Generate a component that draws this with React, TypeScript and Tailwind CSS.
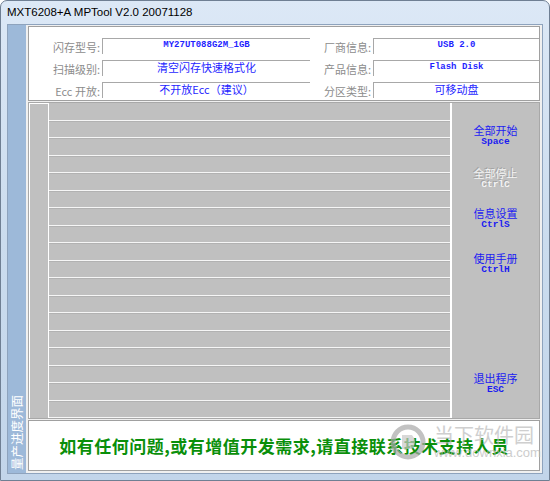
const rows = Array.from({ length: 18 });

const cjk = "font-['Noto_Sans_CJK_SC',sans-serif]";
const mono = "font-['Liberation_Mono','Noto_Sans_CJK_SC',monospace]";

function Field({ label, value, isMono }: { label: string; value: string; isMono?: boolean }) {
  return (
    <>
      <div className={`h-[19px] flex items-center justify-end text-[11px] leading-none text-[#8c8c8c] ${cjk}`}>{label}</div>
      <div
        className={`h-[16px] border-t border-l border-[#a8a8a8] text-center text-[#1f1fff] ${
          isMono ? `${mono} font-bold text-[9px] leading-[12px]` : `${cjk} text-[11px] leading-[12px]`
        }`}
      >
        {value}
      </div>
    </>
  );
}

function Btn({ title, key1, disabled, mt }: { title: string; key1: string; disabled?: boolean; mt: string }) {
  const color = disabled ? "text-[#f4f4f4] [text-shadow:-1px_-1px_0_#a2a2a2]" : "text-[#1b1bf2]";
  return (
    <div className={`flex flex-col items-center ${mt} ${color}`}>
      <span className={`text-[11px] leading-[11px] ${cjk}`}>{title}</span>
      <span className={`text-[9.5px] leading-[12px] font-bold ${mono}`}>{key1}</span>
    </div>
  );
}

export default function App() {
  return (
    <div className="w-[550px] h-[481px] bg-white relative overflow-hidden">
      <div className="h-full flex flex-col rounded-t-[7px] border border-[#6f7f93] bg-gradient-to-b from-[#dce8f6] via-[#cbdcee] to-[#c2d5ea]">
        <div className="h-[24px] flex items-center pl-[6px] text-[11.5px] text-black font-['Liberation_Sans',sans-serif]">
          MXT6208+A MPTool V2.0 20071128
        </div>
        <div className="flex-1 mx-[6px] mb-[6px] border border-[#8ea3bd] bg-[#f0f0f0] flex">
          <div className="w-[18px] bg-[#9db9d9] flex items-end justify-center pb-[3px]">
            <span className={`[writing-mode:vertical-rl] [text-orientation:sideways] rotate-180 text-white text-[12.5px] leading-none ${cjk}`}>
              量产进度界面
            </span>
          </div>
          <div className="flex-1 mx-[2px] mt-[1px] mb-[2px] flex flex-col">
            {/* info panel */}
            <div className="h-[75px] bg-white border border-[#a0a0a0] pt-[11px]">
              <div className="grid grid-cols-[71px_208px_59px_1fr] gap-x-[2px] gap-y-[3px] items-start">
                <Field label="闪存型号:" value="MY27UT088G2M_1GB" isMono />
                <Field label="厂商信息:" value="USB 2.0" isMono />
                <Field label="扫描级别:" value="清空闪存快速格式化" />
                <Field label="产品信息:" value="Flash Disk" isMono />
                <Field label="Ecc 开放:" value="不开放Ecc（建议）" />
                <Field label="分区类型:" value="可移动盘" />
              </div>
            </div>

            {/* progress area */}
            <div className="flex-1 mt-[1px] flex bg-[#c0c0c0] border border-[#a8a8a8]">
              <div className="w-[19px] border-t border-l border-white bg-[#c0c0c0]" />
              <div className="flex-1 flex flex-col border-l border-white">
                {rows.map((_, i) => (
                  <div
                    key={i}
                    className={`${i % 2 === 0 ? "h-[18px]" : "h-[17px]"} border-b border-b-[#f6f6f6] border-t border-t-[#b2b2b2] first:border-t-transparent bg-[#c0c0c0]`}
                  />
                ))}
              </div>
              <div className="w-[89px] border-l-2 border-white flex flex-col">
                <Btn title="全部开始" key1="Space" mt="mt-[22px]" />
                <Btn title="全部停止" key1="CtrlC" disabled mt="mt-[20px]" />
                <Btn title="信息设置" key1="CtrlS" mt="mt-[17px]" />
                <Btn title="使用手册" key1="CtrlH" mt="mt-[22px]" />
                <Btn title="退出程序" key1="ESC" mt="mt-[97px]" />
              </div>
            </div>

            {/* message panel */}
            <div className="h-[51px] mt-[1px] bg-white border border-[#a0a0a0] flex items-center justify-center">
              <span className={`text-[17px] font-bold text-[#0a8f0a] tracking-[0.5px] ${cjk}`}>
                如有任何问题,或有增值开发需求,请直接联系技术支持人员
              </span>
            </div>
          </div>
        </div>
      </div>

      {/* watermark */}
      <div className="absolute left-[390px] top-[423px] flex items-center gap-[8px] pointer-events-none opacity-70">
        <svg width="36" height="38" viewBox="0 0 36 38">
          <circle cx="18" cy="19" r="15" fill="none" stroke="#a9a9a9" strokeWidth="5" />
          <path d="M12 12 L22 12 Q28 19 22 26 L12 26 Z" fill="#c8c8c8" />
        </svg>
        <div className="flex flex-col items-start">
          <span className={`text-[20px] leading-[22px] text-[#bcbcbc] ${cjk}`}>当下软件园</span>
          <span className="text-[13px] leading-[14px] text-[#b8b8b8] font-['Liberation_Sans',sans-serif]">www.downxia.com</span>
        </div>
      </div>
    </div>
  );
}
